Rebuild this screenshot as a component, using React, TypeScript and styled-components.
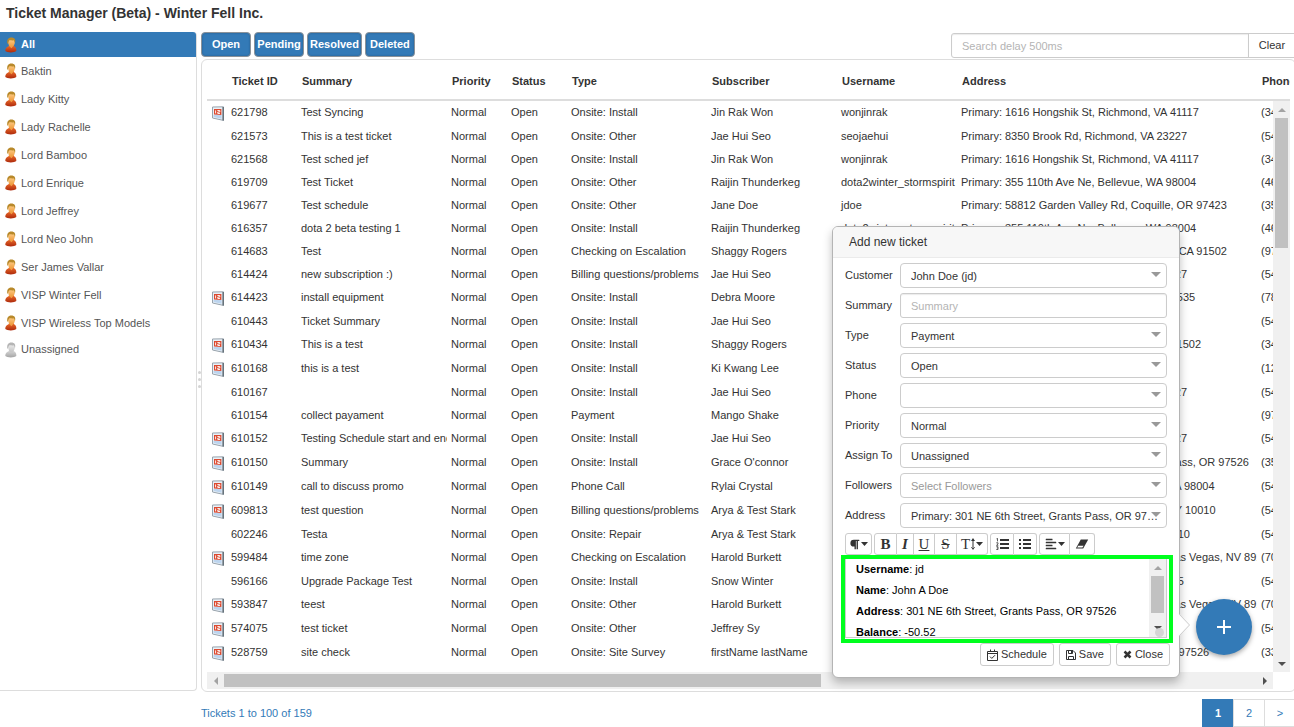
import React, { useState } from 'react';
import styled, { createGlobalStyle, css } from 'styled-components';
import { FaAlignLeft, FaParagraph } from 'react-icons/fa';

const blue = '#337ab7';
const line = '#ddd';
const ink = '#333';

const GlobalStyle = createGlobalStyle`
  * { box-sizing: border-box; }
  body {
    margin: 0;
    background: #fff;
    color: ${ink};
    font: 11px/15px "Liberation Sans", Arial, Helvetica, sans-serif;
  }
  button, input, select { font: inherit; color: inherit; }
`;

/* ---------- page frame ---------- */

const Page = styled.div`
  position: relative;
  overflow: hidden;
  min-height: 100vh;
`;

const Title = styled.h1`
  margin: 0;
  padding: 3px 6px 9px;
  font-size: 14px;
  line-height: 20px;
  font-weight: bold;
`;

const Columns = styled.div`
  display: flex;
`;

const Sidebar = styled.nav`
  flex: 0 0 197px;
  margin-bottom: 36px;
  border: solid ${line};
  border-width: 0 1px 1px 0;
  border-radius: 0 4px 4px 0;
`;

const UserLink = styled.a<{ $active?: boolean; $short?: boolean }>`
  display: flex;
  align-items: center;
  gap: 4px;
  height: ${(p) => (p.$short ? 25 : 28)}px;
  padding-left: 5px;
  color: ${(p) => (p.$active ? '#fff' : '#555')};
  background: ${(p) => (p.$active ? blue : 'transparent')};
  font-weight: ${(p) => (p.$active ? 'bold' : 'normal')};
  border-top-right-radius: ${(p) => (p.$active ? 3 : 0)}px;
  text-decoration: none;
`;

const Splitter = styled.div`
  flex: 0 0 4px;
  display: flex;
  flex-direction: column;
  align-items: center;
  justify-content: center;
  gap: 4px;
`;

const Dot = styled.span`
  width: 3px;
  height: 3px;
  border-radius: 2px;
  background: #d4d4d4;
`;

const Main = styled.main`
  flex: 1;
  min-width: 0;
  margin-right: -2px;
`;

/* ---------- toolbar ---------- */

const Toolbar = styled.div`
  display: flex;
  justify-content: space-between;
  height: 27px;
`;

const Filters = styled.div`
  display: flex;
  gap: 3px;
`;

const FilterButton = styled.button`
  min-width: 50px;
  height: 25px;
  padding: 0 2px;
  border: 1px solid #8b9299;
  border-radius: 4px;
  background: ${blue};
  box-shadow: inset 0 0 2px #245682;
  color: #fff;
  font-weight: bold;
  line-height: 15px;
`;

const Search = styled.div`
  display: flex;
  width: 345px;
  height: 25px;
  margin-top: 1px;
`;

const fieldLook = css`
  border: 1px solid #ccc;
  border-radius: 3px;
  background: #fff;
  box-shadow: inset 0 1px 1px rgba(0, 0, 0, 0.08);
  &::placeholder { color: #b4b4b4; opacity: 1; }
`;

const SearchInput = styled.input`
  ${fieldLook}
  flex: 1;
  min-width: 0;
  padding: 1px 10px 0;
  border-radius: 3px 0 0 3px;
`;

const ClearButton = styled.button`
  width: 48px;
  margin-left: -1px;
  padding: 0;
  border: 1px solid #ccc;
  background: #fff;
`;

/* ---------- ticket table ---------- */

const Panel = styled.section`
  padding: 0 5px 2px;
  border: 1px solid ${line};
  border-radius: 6px;
`;

const HeadClip = styled.div`
  overflow: hidden;
  border-bottom: 2px solid ${line};
`;

const Grid = styled.table`
  table-layout: fixed;
  width: 1390px;
  border-collapse: collapse;
`;

const Th = styled.th`
  height: 39px;
  padding: 4px 5px 0;
  text-align: left;
  white-space: nowrap;
`;

const Row = styled.tr<{ $tall?: boolean }>`
  height: ${(p) => (p.$tall ? 24 : 23)}px;
`;

const Td = styled.td`
  overflow: hidden;
  padding: 4px 4px 0;
  vertical-align: top;
  white-space: nowrap;
`;

const IconTd = styled.td`
  padding: 5px 0 0 4px;
  vertical-align: top;
  svg { display: block; }
`;

const Viewport = styled.div`
  display: grid;
  grid-template-columns: minmax(0, 1fr) 17px;
`;

const Rows = styled.div`
  overflow: hidden;
  padding-bottom: 7px;
`;

const VBar = styled.div`
  display: flex;
  flex-direction: column;
  align-items: center;
  background: #f0f0f0;
`;

const HBar = styled.div`
  display: flex;
  align-items: center;
  height: 17px;
  background: #f0f0f0;
`;

const Thumb = styled.div<{ $w: string; $h: string }>`
  width: ${(p) => p.$w};
  height: ${(p) => p.$h};
  background: #c1c1c1;
`;

const BarEnd = styled.span<{ $push?: boolean }>`
  flex: none;
  display: flex;
  align-items: center;
  justify-content: center;
  width: 17px;
  height: 17px;
  ${(p) => p.$push && 'margin: auto 0 0 auto;'}
`;

/* ---------- footer ---------- */

const Footer = styled.footer`
  display: flex;
  align-items: center;
  justify-content: space-between;
  padding-top: 7px;
  color: ${blue};
`;

const Pager = styled.div`
  display: flex;
`;

const PageLink = styled.a<{ $active?: boolean }>`
  width: 32px;
  height: 28px;
  margin-left: -1px;
  border: 1px solid ${(p) => (p.$active ? blue : line)};
  background: ${(p) => (p.$active ? blue : '#fff')};
  color: ${(p) => (p.$active ? '#fff' : blue)};
  font-weight: ${(p) => (p.$active ? 'bold' : 'normal')};
  line-height: 27px;
  text-align: center;
  text-decoration: none;
`;

/* ---------- add button and popover ---------- */

const AddButton = styled.button`
  position: absolute;
  right: 42px;
  bottom: 72px;
  display: flex;
  align-items: center;
  justify-content: center;
  width: 56px;
  height: 56px;
  padding: 0;
  border: 0;
  border-radius: 50%;
  background: ${blue};
  box-shadow: 0 2px 5px rgba(0, 0, 0, 0.35);
`;

const Popover = styled.form`
  position: absolute;
  right: 114px;
  bottom: 49px;
  width: 348px;
  border: 1px solid #b4b4b4;
  border-radius: 6px;
  background: #fff;
  box-shadow: 0 5px 10px rgba(0, 0, 0, 0.25);
`;

const Pointer = styled.svg`
  position: absolute;
  right: -11px;
  bottom: 41px;
`;

const PopTitle = styled.h2`
  margin: 0;
  padding: 6px 16px;
  border-bottom: 1px solid #ebebeb;
  border-radius: 5px 5px 0 0;
  background: #f7f7f7;
  font-size: 12px;
  line-height: 18px;
  font-weight: normal;
`;

const PopBody = styled.div`
  display: flex;
  flex-direction: column;
  gap: 5px;
  padding: 5px 12px 0;
`;

const Field = styled.div`
  display: flex;
  height: 25px;
  label { flex: 0 0 55px; line-height: 25px; }
`;

const Control = styled.div`
  position: relative;
  flex: 1;
  min-width: 0;
  svg { position: absolute; right: 6px; top: 9px; pointer-events: none; }
`;

const TextInput = styled.input`
  ${fieldLook}
  width: 100%;
  height: 25px;
  padding: 1px 10px 0;
`;

const Select = styled.select<{ $muted?: boolean }>`
  appearance: none;
  display: block;
  width: 100%;
  height: 25px;
  padding: 1px 7px 0 10px;
  border: 1px solid #ccc;
  border-radius: 4px;
  background: #fff;
  color: ${(p) => (p.$muted ? '#999' : ink)};
  overflow: hidden;
  text-overflow: ellipsis;
`;

const Tools = styled.div`
  display: flex;
  gap: 2px;
  height: 22px;
`;

const ToolGroup = styled.div`
  display: flex;
`;

const Tool = styled.button<{ $w: number }>`
  display: flex;
  align-items: center;
  justify-content: center;
  gap: 1px;
  width: ${(p) => p.$w}px;
  height: 22px;
  padding: 0;
  border: 1px solid #ccc;
  background: #fff;
  & + & { border-left: 0; }
  &:first-child { border-radius: 3px 0 0 3px; }
  &:last-child { border-radius: 0 3px 3px 0; }
  &:only-child { border-radius: 3px; }
`;

const Letter = styled.span<{ $bold?: boolean; $italic?: boolean; $line?: string }>`
  font: ${(p) => (p.$italic ? 'italic' : 'normal')} ${(p) => (p.$bold ? 'bold' : 'normal')} 15px/18px
    "Liberation Serif", "Times New Roman", serif;
  text-decoration: ${(p) => p.$line || 'none'};
`;

const Highlight = styled.div`
  margin: -5px -6px 0 -4px;
  padding: 0 2px 1px 0;
  border: 4px solid #00ff1e;
`;

const EditorFrame = styled.div`
  display: flex;
  height: 79px;
  border: 1px solid #ccc;
  border-top: 0;
`;

const Editor = styled.div`
  flex: 1;
  overflow: hidden;
  padding-left: 10px;
  color: #000;
  line-height: 21px;
  outline: 0;
  p { margin: 0; }
`;

const EditorBar = styled(VBar)`
  width: 17px;
`;

const Grip = styled.span`
  width: 9px;
  height: 9px;
  margin: -8px 0 0 3px;
  border-radius: 50%;
  background: #d5d5d5;
`;

const Actions = styled.div`
  display: flex;
  justify-content: flex-end;
  gap: 5px;
  padding: 0 9px 11px;
`;

const ActionButton = styled.button`
  display: flex;
  align-items: center;
  gap: 3px;
  height: 23px;
  padding: 0 6px;
  border: 1px solid #ccc;
  border-radius: 3px;
  background: #fff;
`;

/* ---------- drawings ---------- */

const Person = ({ grey }: { grey?: boolean }) => {
  const id = grey ? 'g' : 'o';
  const c = grey
    ? ['#ddd', '#a4a4a4', '#f0f0f0', '#c8c8c8', '#b5b5b5']
    : ['#f0702c', '#ad2a0c', '#ffcf8a', '#f0a044', '#b8892a'];
  return (
    <svg width="12" height="16" viewBox="0 0 12 16" aria-hidden="true">
      <defs>
        <linearGradient id={`${id}-body`} x1="0" y1="0" x2="0" y2="1">
          <stop offset="0" stopColor={c[0]} />
          <stop offset="1" stopColor={c[1]} />
        </linearGradient>
        <linearGradient id={`${id}-face`} x1="0" y1="0" x2="0" y2="1">
          <stop offset="0" stopColor={c[2]} />
          <stop offset="1" stopColor={c[3]} />
        </linearGradient>
      </defs>
      <path d="M0.3 14C0.3 12 1 10.6 2.6 9.8C3.6 9.3 4 8.8 4 8H8.6C8.6 8.8 9 9.3 9.8 9.8C11 10.6 11.4 12 11.3 14C9.6 15.9 2 15.9 0.3 14Z" fill={`url(#${id}-body)`} />
      <path d="M4.2 7V9L6.4 11.2L8.4 9V7Z" fill={c[3]} />
      <ellipse cx="6.5" cy="5.4" rx="3.3" ry="3.7" fill={`url(#${id}-face)`} />
      <path d="M2.4 7C1.6 2.8 3.2 0.5 6.3 0.5C9.6 0.5 10.9 2.6 10 6C9.4 5 9.4 3.8 8.6 3.2C7 3.7 5.4 3 4.4 3.2C3.4 4 3.6 5.8 2.4 7Z" fill={c[4]} />
    </svg>
  );
};

const Calendar = () => (
  <svg width="14" height="15" viewBox="0 0 14 15" aria-label="Scheduled" role="img">
    <path d="M1.5 1L12.4 0.8V14.4L1.5 12Z" fill="#e9f0f7" stroke="#98a3ac" />
    <path d="M11.4 1H13V14.8L11.4 14.2Z" fill="#67737c" />
    <path d="M2.6 9H10.6V12.8L2.6 11Z" fill="#bcd4ee" />
    <path d="M3 3H10.4V9L3 8.4Z" fill="#dc4a30" />
    <path d="M4.6 4.4V7.4M6.4 4.5H8.8V6H6.8V7.5H9" fill="none" stroke="#fff" strokeWidth="0.9" />
  </svg>
);

const arrows = {
  up: 'M0 5L4 1L8 5Z',
  down: 'M0 1L4 5L8 1Z',
  left: 'M6 -1L2 3L6 7Z',
  right: 'M2 -1L6 3L2 7Z',
};

const Arrow = ({ dir, dark }: { dir: keyof typeof arrows; dark?: boolean }) => (
  <svg width="8" height="6" viewBox="0 0 8 6" overflow="visible" aria-hidden="true">
    <path d={arrows[dir]} fill={dark ? '#505050' : '#a3a3a3'} />
  </svg>
);

const SelectArrow = () => (
  <svg width="10" height="5" viewBox="0 0 10 5" aria-hidden="true">
    <path d="M0 0H10L5 5Z" fill="#999" />
  </svg>
);

const Caret = () => (
  <svg width="7" height="4" viewBox="0 0 7 4" aria-hidden="true">
    <path d="M0 0H7L3.5 4Z" fill={ink} />
  </svg>
);

const HeightMark = () => (
  <svg width="4" height="12" viewBox="0 0 4 12" aria-hidden="true">
    <path d="M2 0L4 3H0ZM2 12L4 9H0ZM1.5 2H2.5V10H1.5Z" fill={ink} />
  </svg>
);

const NumberedList = () => (
  <svg width="13" height="12" viewBox="0 0 13 12" aria-hidden="true">
    <path d="M4 1H13V3H4ZM4 5H13V7H4ZM4 9H13V11H4Z" fill={ink} />
    <path d="M0.5 0.8L1.5 0.3V3.4M0.3 4.8H2V6L0.5 7.3H2.3M0.3 8.7H2V11.5H0.3M0.8 10H2" fill="none" stroke={ink} strokeWidth="0.8" />
  </svg>
);

const BulletedList = () => (
  <svg width="12" height="12" viewBox="0 0 12 12" aria-hidden="true">
    <path d="M0 1H2V3H0ZM4 1H12V3H4ZM0 5H2V7H0ZM4 5H12V7H4ZM0 9H2V11H0ZM4 9H12V11H4Z" fill={ink} />
  </svg>
);

const Eraser = () => (
  <svg width="14" height="10" viewBox="0 0 14 10" aria-hidden="true">
    <path d="M5.8 0.5H13.2L8.2 9.5H0.8Z" fill={ink} />
    <path d="M3.2 6.8L2.2 8.6H7.4L8.6 6.8Z" fill="#fff" />
  </svg>
);

const ScheduleIcon = () => (
  <svg width="11" height="12" viewBox="0 0 11 12" fill="none" stroke={ink} aria-hidden="true">
    <path d="M0.5 2.5H10.5V11.5H0.5ZM0.5 4.5H10.5M3.5 0.5V3M7.5 0.5V3" />
    <path d="M3 7.6L4.8 9.4L8 6.2" />
  </svg>
);

const SaveIcon = () => (
  <svg width="10" height="10" viewBox="0 0 10 10" fill="none" stroke={ink} aria-hidden="true">
    <path d="M0.5 0.5H7L9.5 3V9.5H0.5ZM2.5 0.5V3.5H6.5V0.5M2.5 9.5V6.5H7.5V9.5" />
    <path d="M5 1H6.5V3H5Z" fill={ink} stroke="none" />
  </svg>
);

const CloseIcon = () => (
  <svg width="9" height="9" viewBox="0 0 9 9" aria-hidden="true">
    <path d="M1.5 1.5L7.5 7.5M7.5 1.5L1.5 7.5" stroke={ink} strokeWidth="2.5" />
  </svg>
);

/* ---------- data ---------- */

const users = [
  'Baktin', 'Lady Kitty', 'Lady Rachelle', 'Lord Bamboo', 'Lord Enrique', 'Lord Jeffrey',
  'Lord Neo John', 'Ser James Vallar', 'VISP Winter Fell', 'VISP Wireless Top Models',
];

const headings = ['Ticket ID', 'Summary', 'Priority', 'Status', 'Type', 'Subscriber', 'Username', 'Address', 'Phone'];
const widths = [20, 70, 150, 60, 60, 140, 130, 120, 300];

type Ticket = [boolean, string, string, string, string, string, string, string];

const tickets: Ticket[] = [
  [true, '621798', 'Test Syncing', 'Onsite: Install', 'Jin Rak Won', 'wonjinrak', 'Primary: 1616 Hongshik St, Richmond, VA 41117', '(345) 555-0101'],
  [false, '621573', 'This is a test ticket', 'Onsite: Other', 'Jae Hui Seo', 'seojaehui', 'Primary: 8350 Brook Rd, Richmond, VA 23227', '(541) 555-0102'],
  [false, '621568', 'Test sched jef', 'Onsite: Install', 'Jin Rak Won', 'wonjinrak', 'Primary: 1616 Hongshik St, Richmond, VA 41117', '(345) 555-0101'],
  [false, '619709', 'Test Ticket', 'Onsite: Other', 'Raijin Thunderkeg', 'dota2winter_stormspirit', 'Primary: 355 110th Ave Ne, Bellevue, WA 98004', '(465) 555-0103'],
  [false, '619677', 'Test schedule', 'Onsite: Other', 'Jane Doe', 'jdoe', 'Primary: 58812 Garden Valley Rd, Coquille, OR 97423', '(352) 555-0104'],
  [false, '616357', 'dota 2 beta testing 1', 'Onsite: Install', 'Raijin Thunderkeg', 'dota2winter_stormspirit', 'Primary: 355 110th Ave Ne, Bellevue, WA 98004', '(465) 555-0103'],
  [false, '614683', 'Test', 'Checking on Escalation', 'Shaggy Rogers', 'srogers', 'Primary: 1200 North Riverside Dr., Burbank, CA 91502', '(971) 555-0105'],
  [false, '614424', 'new subscription :)', 'Billing questions/problems', 'Jae Hui Seo', 'seojaehui', 'Primary: 8350 Brook Rd, Richmond, VA 23227', '(541) 555-0102'],
  [true, '614423', 'install equipment', 'Onsite: Install', 'Debra Moore', 'dmoore', 'Primary: 410 Harbor Street, Medford, OR 97535', '(781) 555-0106'],
  [false, '610443', 'Ticket Summary', 'Onsite: Install', 'Jae Hui Seo', 'seojaehui', 'Primary: 12 Oak St, Talent, OR 97540', '(541) 555-0102'],
  [true, '610434', 'This is a test', 'Onsite: Install', 'Shaggy Rogers', 'srogers', 'Primary: 1200 Riverside Ave, Burbank, CA 91502', '(345) 555-0107'],
  [true, '610168', 'this is a test', 'Onsite: Install', 'Ki Kwang Lee', 'kikwang', 'Primary: 77 Elm St, Ashland, OR 97520', '(123) 555-0108'],
  [false, '610167', '', 'Onsite: Install', 'Jae Hui Seo', 'seojaehui', 'Primary: 8350 Brook Rd, Richmond, VA 23227', '(541) 555-0102'],
  [false, '610154', 'collect payament', 'Payment', 'Mango Shake', 'mshake', 'Primary: 5 Main St, Medford, OR 97501', '(971) 555-0109'],
  [true, '610152', 'Testing Schedule start and end', 'Onsite: Install', 'Jae Hui Seo', 'seojaehui', 'Primary: 8350 Brook Rd, Richmond, VA 23227', '(541) 555-0102'],
  [true, '610150', 'Summary', 'Onsite: Install', "Grace O'connor", 'goconnor', 'Primary: 145 Redwood Hwy Ste 7, Grants Pass, OR 97526', '(352) 555-0110'],
  [true, '610149', 'call to discuss promo', 'Phone Call', 'Rylai Crystal', 'rcrystal', 'Primary: 355 110th Avenue Ne, Bellevue, WA 98004', '(541) 555-0111'],
  [true, '609813', 'test question', 'Billing questions/problems', 'Arya & Test Stark', 'astark', 'Primary: 245 Park Avenue So., New York, NY 10010', '(541) 555-0112'],
  [false, '602246', 'Testa', 'Onsite: Repair', 'Arya & Test Stark', 'astark', 'Primary: 24 Park Avenue, New York, NY 10010', '(541) 555-0112'],
  [true, '599484', 'time zone', 'Checking on Escalation', 'Harold Burkett', 'hburkett', 'Primary: 109 South Las Vegas Boulevard, Las Vegas, NV 89109', '(702) 555-0113'],
  [false, '596166', 'Upgrade Package Test', 'Onsite: Install', 'Snow Winter', 'swinter', 'Primary: 301 NE 6th Street, Talent, OR 97535', '(541) 555-0114'],
  [true, '593847', 'teest', 'Onsite: Other', 'Harold Burkett', 'hburkett', 'Primary: 109 South Las Vegas Boulevard, Las Vegas, NV 89109', '(702) 555-0113'],
  [true, '574075', 'test ticket', 'Onsite: Other', 'Jeffrey Sy', 'jsy', 'Primary: 9 Pine St, Medford, OR 97504', '(541) 555-0115'],
  [true, '528759', 'site check', 'Onsite: Site Survey', 'firstName lastName', 'flast', 'Primary: 301 NE 6th St W, Grants Pass, OR 97526', '(331) 555-0116'],
];

const ColumnWidths = () => (
  <colgroup>
    {widths.map((w, i) => (
      <col key={i} width={w} />
    ))}
    <col />
  </colgroup>
);

interface PickProps {
  id: string;
  label: string;
  value: string;
  muted?: boolean;
}

const Pick = ({ id, label, value, muted }: PickProps) => (
  <Field>
    <label htmlFor={id}>{label}</label>
    <Control>
      <Select id={id} $muted={muted}>
        <option>{value}</option>
      </Select>
      <SelectArrow />
    </Control>
  </Field>
);

export default function App() {
  const [query, setQuery] = useState('');

  return (
    <Page>
      <GlobalStyle />
      <Title>Ticket Manager (Beta) - Winter Fell Inc.</Title>
      <Columns>
        <Sidebar>
          <UserLink href="#all" $active $short>
            <Person />
            All
          </UserLink>
          {users.map((name) => (
            <UserLink key={name} href="#user">
              <Person />
              {name}
            </UserLink>
          ))}
          <UserLink href="#unassigned" $short>
            <Person grey />
            Unassigned
          </UserLink>
        </Sidebar>
        <Splitter>
          <Dot />
          <Dot />
          <Dot />
        </Splitter>
        <Main>
          <Toolbar>
            <Filters>
              {['Open', 'Pending', 'Resolved', 'Deleted'].map((name) => (
                <FilterButton key={name} type="button">{name}</FilterButton>
              ))}
            </Filters>
            <Search>
              <SearchInput
                aria-label="Search tickets"
                placeholder="Search delay 500ms"
                value={query}
                onChange={(e) => setQuery(e.target.value)}
              />
              <ClearButton type="button" onClick={() => setQuery('')}>Clear</ClearButton>
            </Search>
          </Toolbar>

          <Panel>
            <HeadClip>
              <Grid>
                <ColumnWidths />
                <thead>
                  <tr>
                    <Th aria-label="Scheduled" />
                    {headings.map((h) => (
                      <Th key={h}>{h}</Th>
                    ))}
                  </tr>
                </thead>
              </Grid>
            </HeadClip>
            <Viewport>
              <Rows>
                <Grid>
                  <ColumnWidths />
                  <tbody>
                    {tickets.map(([scheduled, id, summary, type, subscriber, username, address, phone]) => (
                      <Row key={id} $tall={scheduled}>
                        <IconTd>{scheduled && <Calendar />}</IconTd>
                        <Td>{id}</Td>
                        <Td>{summary}</Td>
                        <Td>Normal</Td>
                        <Td>Open</Td>
                        <Td>{type}</Td>
                        <Td>{subscriber}</Td>
                        <Td>{username}</Td>
                        <Td>{address}</Td>
                        <Td>{phone}</Td>
                      </Row>
                    ))}
                  </tbody>
                </Grid>
              </Rows>
              <VBar>
                <BarEnd><Arrow dir="up" /></BarEnd>
                <Thumb $w="13px" $h="130px" />
                <BarEnd $push><Arrow dir="down" dark /></BarEnd>
              </VBar>
              <HBar>
                <BarEnd><Arrow dir="left" /></BarEnd>
                <Thumb $w="56%" $h="13px" />
                <BarEnd $push><Arrow dir="right" dark /></BarEnd>
              </HBar>
            </Viewport>
          </Panel>

          <Footer>
            <span>Tickets 1 to 100 of 159</span>
            <Pager>
              <PageLink href="#1" $active>1</PageLink>
              <PageLink href="#2">2</PageLink>
              <PageLink href="#next">&gt;</PageLink>
            </Pager>
          </Footer>
        </Main>
      </Columns>

      <AddButton type="button" aria-label="Add new ticket">
        <svg width="14" height="14" viewBox="0 0 14 14" aria-hidden="true">
          <path d="M6 0H8V6H14V8H8V14H6V8H0V6H6Z" fill="#fff" />
        </svg>
      </AddButton>

      <Popover onSubmit={(e) => e.preventDefault()}>
        <Pointer width="11" height="22" viewBox="0 0 11 22" aria-hidden="true">
          <path d="M0 0L10.5 11L0 22" fill="#fff" stroke="#ccc" />
        </Pointer>
        <PopTitle>Add new ticket</PopTitle>
        <PopBody>
          <Pick id="customer" label="Customer" value="John Doe (jd)" />
          <Field>
            <label htmlFor="summary">Summary</label>
            <Control>
              <TextInput id="summary" placeholder="Summary" />
            </Control>
          </Field>
          <Pick id="type" label="Type" value="Payment" />
          <Pick id="status" label="Status" value="Open" />
          <Pick id="phone" label="Phone" value="" />
          <Pick id="priority" label="Priority" value="Normal" />
          <Pick id="assign" label="Assign To" value="Unassigned" />
          <Pick id="followers" label="Followers" value="Select Followers" muted />
          <Pick id="address" label="Address" value="Primary: 301 NE 6th Street, Grants Pass, OR 97526" />
          <Tools>
            <ToolGroup>
              <Tool type="button" $w={27} aria-label="Paragraph"><FaParagraph size={11} /><Caret /></Tool>
            </ToolGroup>
            <ToolGroup>
              <Tool type="button" $w={23} aria-label="Bold"><Letter $bold>B</Letter></Tool>
              <Tool type="button" $w={17} aria-label="Italic"><Letter $bold $italic>I</Letter></Tool>
              <Tool type="button" $w={21} aria-label="Underline"><Letter $line="underline">U</Letter></Tool>
              <Tool type="button" $w={22} aria-label="Strikethrough"><Letter $line="line-through">S</Letter></Tool>
              <Tool type="button" $w={31} aria-label="Font size"><Letter>T</Letter><HeightMark /><Caret /></Tool>
            </ToolGroup>
            <ToolGroup>
              <Tool type="button" $w={24} aria-label="Numbered list"><NumberedList /></Tool>
              <Tool type="button" $w={23} aria-label="Bulleted list"><BulletedList /></Tool>
            </ToolGroup>
            <ToolGroup>
              <Tool type="button" $w={31} aria-label="Align"><FaAlignLeft size={12} /><Caret /></Tool>
              <Tool type="button" $w={25} aria-label="Clear formatting"><Eraser /></Tool>
            </ToolGroup>
          </Tools>
          <Highlight>
            <EditorFrame>
              <Editor contentEditable suppressContentEditableWarning role="textbox" aria-label="Details">
                <p><b>Username</b>: jd</p>
                <p><b>Name</b>: John A Doe</p>
                <p><b>Address</b>: 301 NE 6th Street, Grants Pass, OR 97526</p>
                <p><b>Balance</b>: -50.52</p>
              </Editor>
              <EditorBar>
                <BarEnd><Arrow dir="up" /></BarEnd>
                <Thumb $w="13px" $h="37px" />
                <BarEnd $push><Arrow dir="down" dark /></BarEnd>
                <Grip />
              </EditorBar>
            </EditorFrame>
          </Highlight>
        </PopBody>
        <Actions>
          <ActionButton type="button"><ScheduleIcon />Schedule</ActionButton>
          <ActionButton type="submit"><SaveIcon />Save</ActionButton>
          <ActionButton type="button"><CloseIcon />Close</ActionButton>
        </Actions>
      </Popover>
    </Page>
  );
}
